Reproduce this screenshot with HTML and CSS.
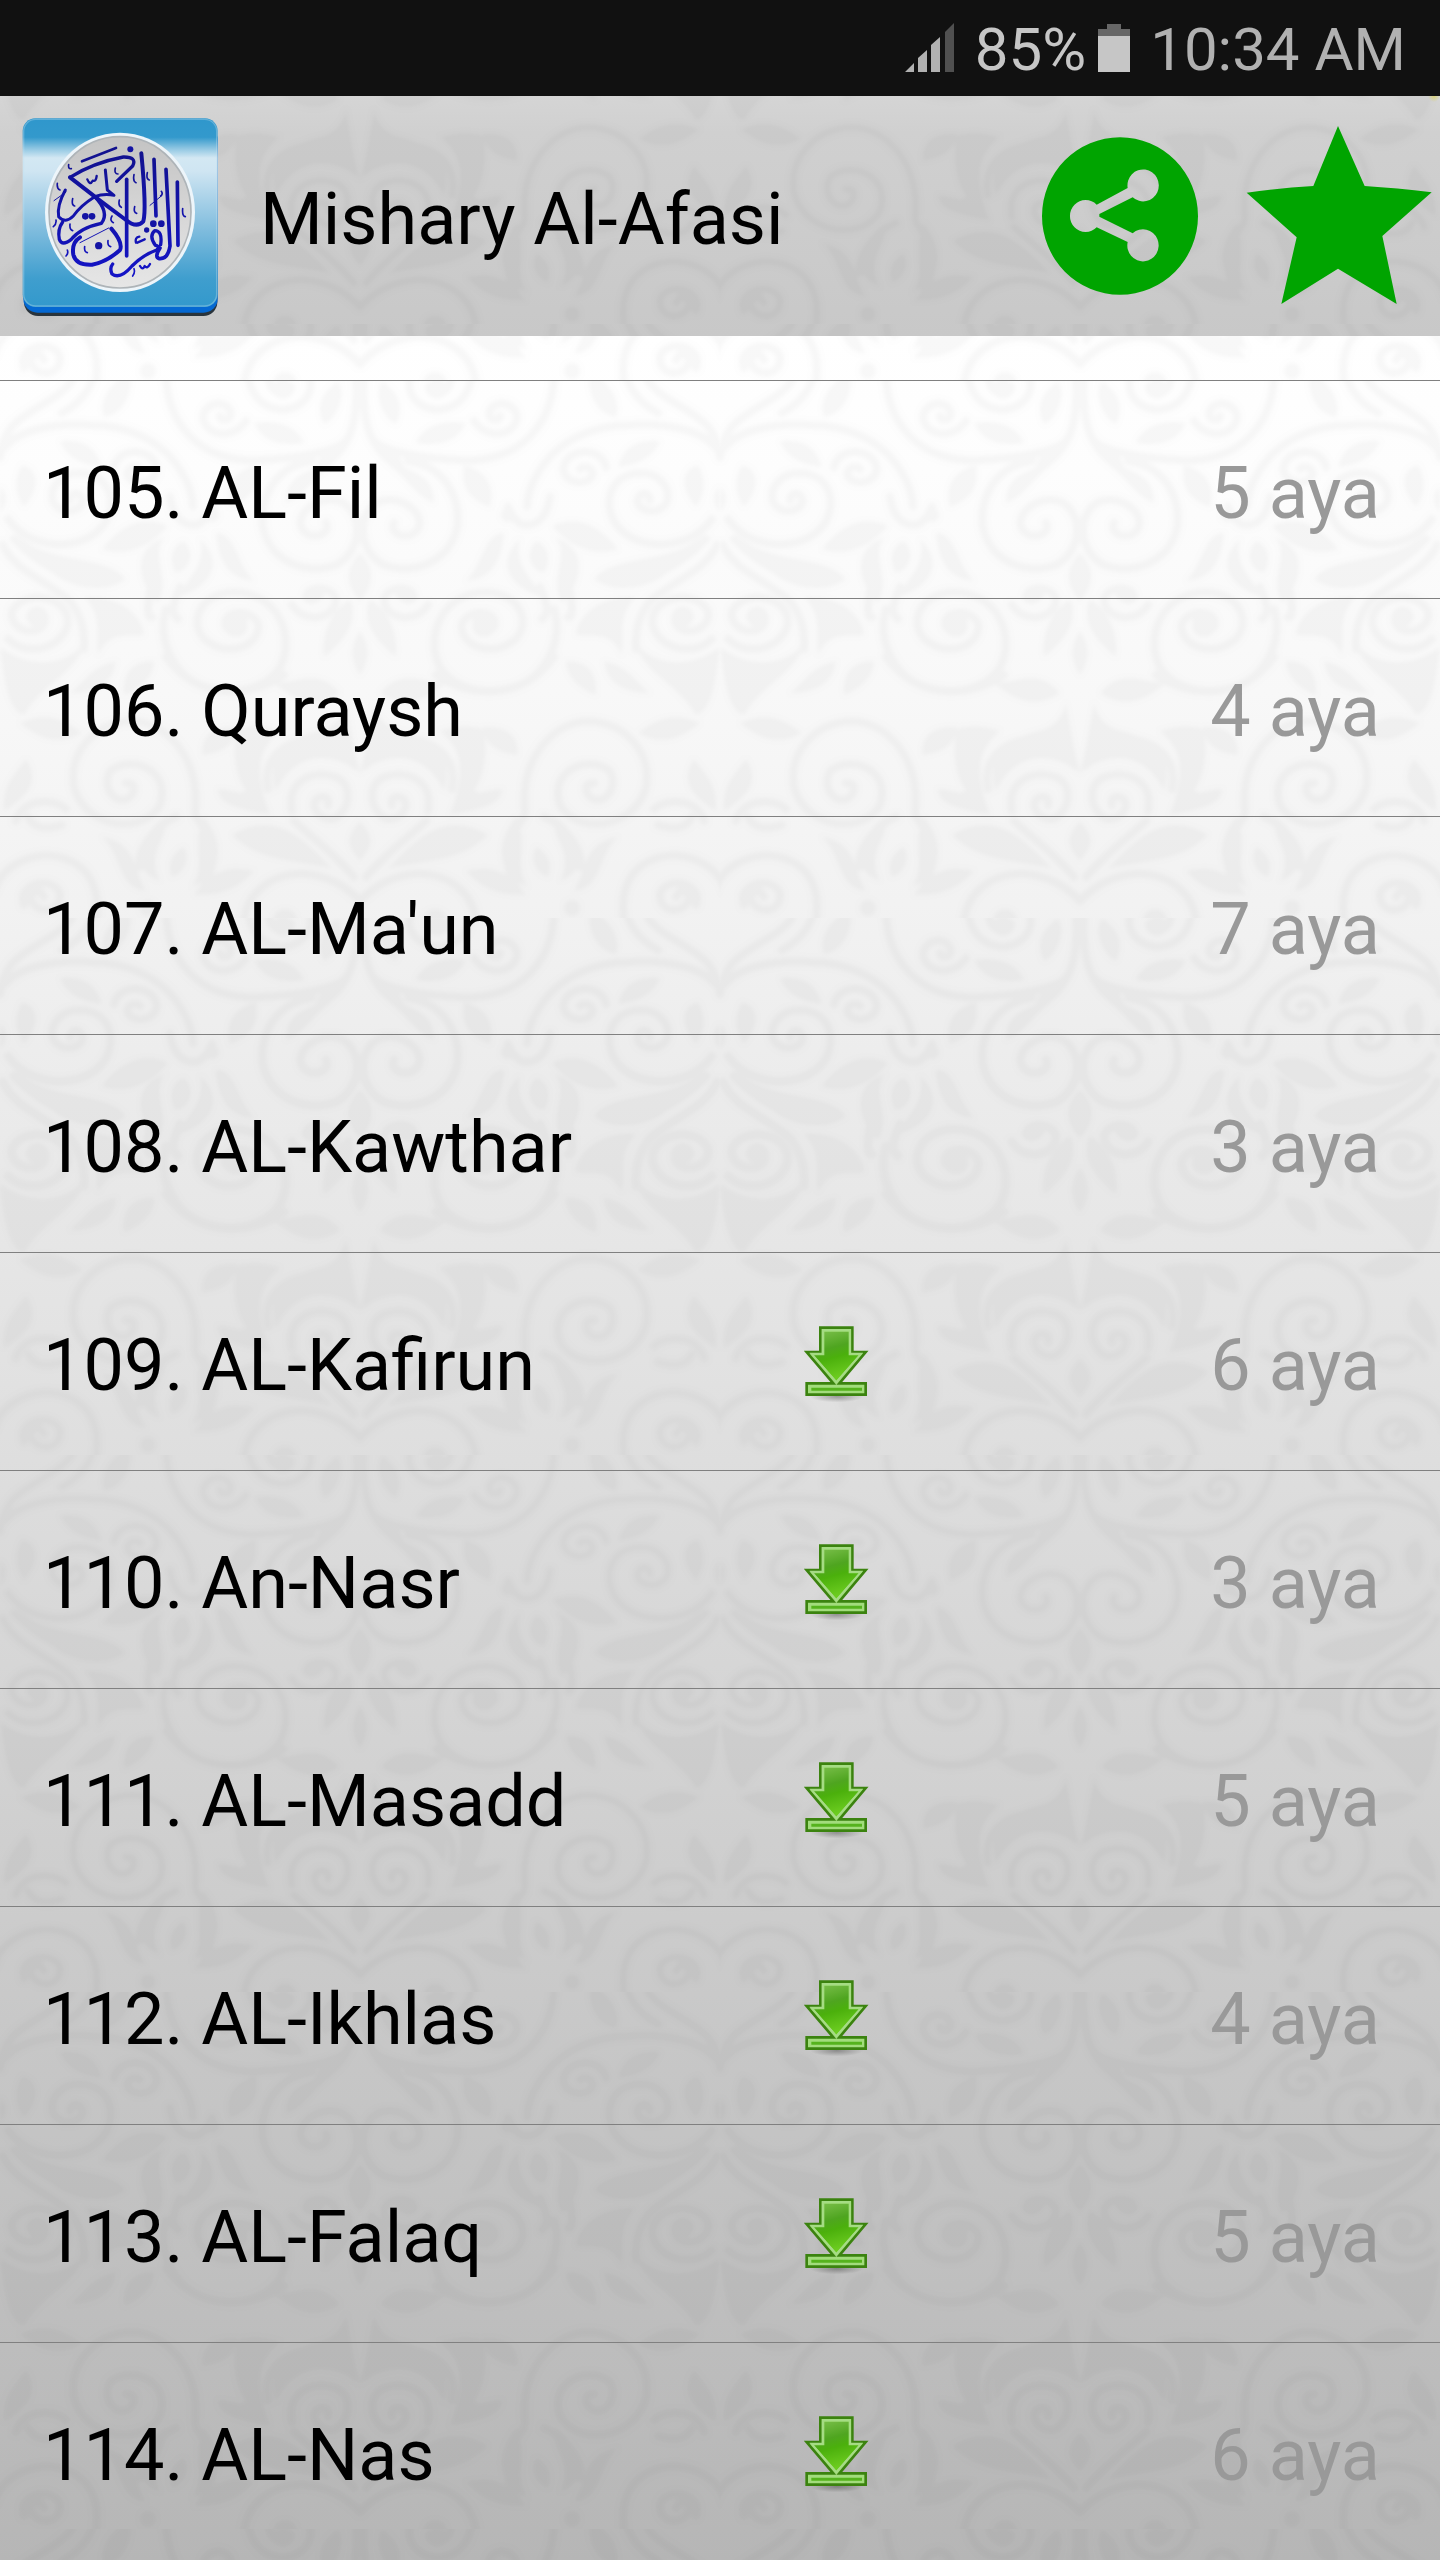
FILE: index.html
```html
<!DOCTYPE html>
<html lang="en">
<head>
<meta charset="utf-8">
<meta name="viewport" content="width=device-width, initial-scale=1">
<title>Mishary Al-Afasi</title>
<link rel="stylesheet" href="styles.css">
</head>
<body>
<svg class="defs" width="0" height="0" aria-hidden="true">
  <defs>
    <filter id="soften" x="-5%" y="-5%" width="110%" height="110%"><feGaussianBlur stdDeviation="2"/></filter>
    <!-- left half of the damask tile; the right half is its mirror image -->
    <g id="half" fill="none" stroke="#000" stroke-width="8" stroke-linecap="round" stroke-linejoin="round">
      <path d="M5 66C20 48 55 42 90 44C130 44 165 62 182 92Q192 108 193 125"/>
      <path d="M8 138C30 170 85 172 105 142C118 118 108 92 78 92C58 93 46 112 55 124C66 136 86 128 82 117C78 110 70 112 70 119"/>
      <path d="M114 86C118 66 150 66 156 84C160 98 142 106 130 98C122 90 134 82 140 88"/>
      <path d="M72 0C60 18 24 30 10 48Q2 60 0 76M92 0Q84 20 62 32"/>
      <path d="M246 40C234 58 208 56 203 38C202 22 226 16 231 32C230 42 220 40 220 35"/>
      <path d="M167 -20C160 40 200 84 262 79Q320 76 345 62Q358 44 356 0"/>
      <path d="M248 -12C248 40 308 38 311 4C312 -14 284 -28 270 -8C264 12 290 20 291 6"/>
      <path d="M312 80C282 84 264 106 262 136C262 176 302 196 336 184C362 170 364 134 342 121C320 112 294 132 302 148C312 162 332 152 326 142"/>
      <path d="M3 164C14 190 48 200 70 220Q86 240 84 268M14 158Q40 185 80 200"/>
      <path d="M8 258C28 278 66 266 68 240C66 214 24 208 12 230C8 250 40 258 45 240C46 228 32 226 30 236"/>
      <path d="M210 262C188 250 194 214 232 211C278 210 296 256 280 286C262 316 208 318 182 292C164 272 160 248 166 228M210 262C230 276 262 264 258 242C250 226 220 230 226 246Q234 254 242 244"/>
      <path d="M292 224C304 244 336 238 336 218C332 204 308 204 306 216Q312 222 320 214"/>
      <path d="M166 276C196 318 248 318 284 294"/>
      <path d="M195 430C200 380 170 342 132 340C92 342 68 374 74 406C84 446 142 456 160 424C172 390 132 372 110 390C100 410 120 428 132 414Q138 402 126 402"/>
      <path d="M268 408C262 376 286 358 318 358Q346 362 354 384M292 430C286 400 312 388 336 396C354 404 350 430 334 438C316 440 308 420 320 416Q330 414 328 424"/>
      <path d="M16 440C22 418 52 416 66 428M28 436Q36 452 62 444"/>
      <path d="M-6 510C4 474 62 460 88 494Q100 512 96 537M24 524C16 502 52 494 60 512C62 532 36 536 30 516Q38 504 44 516"/>
      <path d="M244 540C248 506 280 488 314 494Q342 500 360 520M294 440C316 460 336 474 354 496"/>
      <path d="M140 486C136 466 160 442 176 436M196 436Q224 470 204 506"/>
      <path d="M150 210Q145 238 152 236M180 206Q168 232 178 238M170 116Q174 142 192 144Q204 145 212 126"/>
      <g fill="#000" stroke="none">
        <path d="M60 60C84 58 96 66 102 86C82 84 66 76 60 60ZM22 84C42 90 38 110 24 126C14 112 14 98 22 84ZM130 -8C134 16 120 34 104 36C98 18 112 0 130 -8Z"/>
        <path d="M254 42C282 38 298 48 304 62C280 66 262 60 254 42ZM338 0C348 16 334 40 324 43C314 24 324 10 338 0ZM256 84C260 108 250 118 230 126C224 102 236 90 256 84Z"/>
        <path d="M356 42C352 76 326 84 310 104Q298 118 286 122C286 96 302 94 316 86C320 68 340 66 356 42Z"/>
        <path d="M168 145C150 166 126 176 102 168C118 148 140 132 168 145ZM166 156C148 172 172 196 158 222C136 200 132 166 166 156ZM184 160C198 176 186 190 176 192C168 178 172 164 184 160ZM200 158C222 178 216 204 178 216C190 194 206 184 200 158ZM216 152C236 152 236 182 254 200C226 198 218 176 216 152Z"/>
        <path d="M16 152C44 184 104 172 126 198C104 214 74 206 58 196Q32 176 16 152ZM84 216C116 214 142 232 144 254C122 256 110 250 98 274C96 250 102 234 84 216Z"/>
        <path d="M0 266C28 288 66 286 84 262C78 292 42 302 24 334C8 330 4 298 0 266ZM70 312C84 302 90 286 116 280C114 300 98 312 70 312ZM124 314C122 290 134 280 154 280C154 296 140 308 124 314Z"/>
        <path d="M274 302C298 302 318 286 340 312C322 324 302 326 274 302ZM20 342C46 330 64 338 82 352C60 364 42 360 20 342ZM202 374C202 352 214 346 236 346C236 364 222 372 202 374Z"/>
        <path d="M346 322C352 354 354 370 360 392C330 368 294 372 276 410C264 372 294 356 318 350Q340 346 346 322ZM236 348Q256 342 280 350C254 372 256 396 270 434C240 428 218 424 218 408C230 408 238 414 246 410C232 388 234 366 236 348Z"/>
        <path d="M4 430C2 404 14 394 26 378C38 396 34 412 4 430ZM0 106Q12 116 0 132ZM360 172C346 186 344 202 360 220ZM360 250C350 264 350 280 360 294Z"/>
        <path d="M350 218C360 240 344 260 324 276C322 254 328 234 350 218ZM164 436C172 458 144 468 160 500C130 490 138 456 164 436ZM204 436C228 466 220 494 192 506C208 482 190 466 204 436ZM184 466C192 482 180 494 172 496C166 482 174 470 184 466Z"/>
        <path d="M102 456C138 462 132 488 146 510C118 508 122 474 102 456ZM194 514C212 490 228 484 254 490C236 510 218 514 194 514ZM232 454C272 430 300 452 332 488C296 478 260 482 232 454ZM360 440C346 456 346 464 360 480Z"/>
        <circle cx="212" cy="134" r="7"/><circle cx="148" cy="527" r="8"/><circle cx="37" cy="236" r="10"/><circle cx="283" cy="8" r="10"/><circle cx="285" cy="540" r="12"/><circle cx="236" cy="244" r="12"/>
      </g>
    </g>
    <g id="tile" opacity=".027" filter="url(#soften)">
      <use href="#half"/><use href="#half" transform="matrix(-1 0 0 1 720 0)"/>
    </g>
    <pattern id="damask-list" width="720" height="537" y="45" patternUnits="userSpaceOnUse"><use href="#tile"/></pattern>
    <pattern id="damask-bar" width="720" height="537" y="228" patternUnits="userSpaceOnUse"><use href="#tile"/></pattern>

    <linearGradient id="tileBlue" x1="0" y1="0" x2="0" y2="1">
      <stop offset="0" stop-color="#2f97cc"/><stop offset=".1" stop-color="#3399cc"/><stop offset=".16" stop-color="#8fc6e2"/><stop offset=".21" stop-color="#d3e8f3"/><stop offset=".28" stop-color="#cfe5f2"/><stop offset=".6" stop-color="#7dbbdd"/><stop offset=".85" stop-color="#3f9ece"/><stop offset="1" stop-color="#3399cc"/>
    </linearGradient>
    <linearGradient id="disc" x1="0" y1="0" x2="0" y2="1">
      <stop offset="0" stop-color="#c3c3c3"/><stop offset=".5" stop-color="#d6d6d6"/><stop offset="1" stop-color="#e6e6e6"/>
    </linearGradient>
    <linearGradient id="ink" gradientUnits="userSpaceOnUse" x1="0" y1="150" x2="0" y2="550">
      <stop offset="0" stop-color="#12128c"/><stop offset="1" stop-color="#1414c8"/>
    </linearGradient>
    <linearGradient id="arrow" x1="0" y1="0" x2=".25" y2="1">
      <stop offset="0" stop-color="#7cc04c"/><stop offset=".4" stop-color="#4fa520"/><stop offset=".6" stop-color="#4bb00c"/><stop offset="1" stop-color="#6ccc20"/>
    </linearGradient>
    <radialGradient id="shade"><stop offset="0" stop-color="#000" stop-opacity=".3"/><stop offset="1" stop-color="#000" stop-opacity="0"/></radialGradient>
    <symbol id="download" viewBox="60 60 216 252">
      <ellipse cx="170" cy="290" rx="80" ry="17" fill="url(#shade)"/>
      <path d="M121 83H217V156H257L178 250H257V284H80V250H160L80 156H121Z" fill="#a2dc7c" stroke="#3b830f" stroke-width="8"/>
      <path d="M133 95H206V166H236L169 242L102 166H133Z" fill="url(#arrow)"/>
      <path d="M128 90H211V161H244L169 246L94 161H128Z" fill="none" stroke="#a6db86" stroke-width="5"/>
      <path d="M94 268H246" stroke="#55b31d" stroke-width="9"/>
    </symbol>
  </defs>
</svg>

<div class="status">
  <svg class="signal" viewBox="0 0 50 50" aria-label="Signal strength">
    <path fill="#b1b1b1" d="M0 49L9 40V49ZM13 49V35L22 27V49ZM26 49V22L35 14V49Z"/><path fill="#505050" d="M40 49V9L49 0V49Z"/>
  </svg>
  <span class="charge">85%</span>
  <svg class="battery" viewBox="0 0 32 48" aria-label="Battery">
    <path fill="#676767" d="M9 0H23V5H32V12H0V5H9Z"/><path fill="#c6c6c6" d="M0 12H32V48H0Z"/>
  </svg>
  <time class="clock">10:34 AM</time>
</div>

<header class="bar">
  <svg class="damask" aria-hidden="true"><rect width="100%" height="100%" fill="url(#damask-bar)"/></svg>
  <svg class="logo" viewBox="0 0 720 720" role="img" aria-label="Quran">
    <rect x="72" y="90" width="580" height="570" rx="42" fill="#2a343c"/>
    <rect x="70" y="90" width="583" height="560" rx="42" fill="#0568d2"/>
    <rect x="68" y="67" width="585" height="566" rx="38" fill="url(#tileBlue)"/>
    <rect x="71" y="70" width="579" height="560" rx="36" fill="none" stroke="#bfe0f0" stroke-opacity=".35" stroke-width="4"/>
    <ellipse cx="360" cy="349" rx="225" ry="239" fill="#edf5fa"/>
    <ellipse cx="360" cy="349" rx="213" ry="227" fill="url(#disc)" stroke="#aeb4b8" stroke-width="5"/>
    <g fill="none" stroke="url(#ink)" stroke-linecap="round" stroke-linejoin="round">
      <path d="M246 196L348 156" stroke-width="8"/>
      <path d="M350 256L398 210Q412 182 370 183Q280 200 210 244" stroke-width="10"/>
      <path d="M210 244L300 314L378 372Q410 398 430 376Q440 340 424 172" stroke-width="12"/>
      <path d="M316 222L322 282L342 298Q312 292 284 302Q240 330 220 360Q196 384 176 362Q170 330 196 282" stroke-width="9"/>
      <path d="M284 302Q330 350 304 382Q240 396 214 430Q186 452 178 430Q172 400 188 378" stroke-width="10"/>
      <path d="M380 250V480" stroke-width="11"/>
      <path d="M462 190L468 360M498 220L510 450Q504 490 478 488Q462 484 480 456M532 258L534 448" stroke-width="11"/>
      <path d="M482 446Q488 404 464 404Q446 420 466 448Q482 450 470 462Q430 476 396 510Q360 552 336 534Q328 516 338 504" stroke-width="10"/>
      <path d="M334 398Q370 440 360 462Q320 498 276 506Q228 508 220 476Q214 440 240 424" stroke-width="12"/>
      <path d="M408 440Q404 424 418 422M412 440L434 430M420 510Q428 524 434 510Q442 520 450 504M262 250Q270 270 278 254Q288 258 290 240" stroke-width="7"/>
      <path d="M206 206q-2 14 8 12M346 216q-4 18 8 18M402 236q-4 20 6 24M442 230q-4 20 6 22M172 262q-2 16 8 20M218 308q-4 20 6 22M358 312q-4 18 6 22M404 332q-4 18 6 20M210 384q-2 18 8 20M254 452q-2 16 8 18M324 434q-2 16 8 18M548 338q-2 22 8 24M336 360q-8 14 4 20M160 392q10-8 8-20M198 480q8-8 4-18M398 540q8-10 4-22M484 286q6 8-2 14" stroke-width="5"/>
      <path d="M162 314L198 288M240 440L326 396M450 328L484 300" stroke-width="3"/>
    </g>
    <g fill="#1414a4"><circle cx="391" cy="160" r="9"/><circle cx="256" cy="361" r="10"/><circle cx="276" cy="361" r="10"/><circle cx="460" cy="383" r="10"/><circle cx="484" cy="383" r="10"/><circle cx="296" cy="449" r="11"/><circle cx="440" cy="402" r="8"/></g>
  </svg>
  <h1 class="title">Mishary Al-Afasi</h1>
  <button class="action" type="button" aria-label="Share">
    <svg class="share" viewBox="60 0 480 720">
      <path fill="#00a400" fill-rule="evenodd" d="M300 124A234 236 0 1 1 300 596A234 236 0 1 1 300 124ZM323 276L230 326A47 48 0 1 0 230 394L323 438A47 48 0 1 0 338 412L238 362V354L338 304A47 48 0 1 0 323 276Z"/>
    </svg>
  </button>
  <button class="action" type="button" aria-label="Favourite">
    <svg class="star" viewBox="660 0 600 720">
      <path fill="#00a400" d="M954 90L1034 270Q1130 276 1235 289L1087 420L1130 624L954 518L784 624L830 424L680 290Q780 276 880 270Z"/>
    </svg>
  </button>
</header>

<main class="list">
  <svg class="damask" aria-hidden="true"><rect width="100%" height="100%" fill="url(#damask-list)"/></svg>
  <ul class="rows">
    <li class="row"><a class="name" href="#105">105. AL-Fil</a><span class="count">5 aya</span></li>
    <li class="row"><a class="name" href="#106">106. Quraysh</a><span class="count">4 aya</span></li>
    <li class="row"><a class="name" href="#107">107. AL-Ma'un</a><span class="count">7 aya</span></li>
    <li class="row"><a class="name" href="#108">108. AL-Kawthar</a><span class="count">3 aya</span></li>
    <li class="row"><a class="name" href="#109">109. AL-Kafirun</a><button class="get" type="button" aria-label="Download 109"><svg><use href="#download"/></svg></button><span class="count">6 aya</span></li>
    <li class="row"><a class="name" href="#110">110. An-Nasr</a><button class="get" type="button" aria-label="Download 110"><svg><use href="#download"/></svg></button><span class="count">3 aya</span></li>
    <li class="row"><a class="name" href="#111">111. AL-Masadd</a><button class="get" type="button" aria-label="Download 111"><svg><use href="#download"/></svg></button><span class="count">5 aya</span></li>
    <li class="row"><a class="name" href="#112">112. AL-Ikhlas</a><button class="get" type="button" aria-label="Download 112"><svg><use href="#download"/></svg></button><span class="count">4 aya</span></li>
    <li class="row"><a class="name" href="#113">113. AL-Falaq</a><button class="get" type="button" aria-label="Download 113"><svg><use href="#download"/></svg></button><span class="count">5 aya</span></li>
    <li class="row"><a class="name" href="#114">114. AL-Nas</a><button class="get" type="button" aria-label="Download 114"><svg><use href="#download"/></svg></button><span class="count">6 aya</span></li>
  </ul>
</main>
</body>
</html>
```
FILE: styles.css
```css
* {
  box-sizing: border-box;
}

body {
  margin: 0;
  min-height: 100vh;
  display: flex;
  flex-direction: column;
  font-family: Roboto, "Noto Sans", sans-serif;
  font-size: 72px;
  line-height: 84px;
  color: #000;
}

svg {
  display: block;
}

button {
  padding: 0;
  border: 0;
  background: none;
}

.defs {
  position: absolute;
}

.status {
  height: 96px;
  padding: 4px 34px 0 0;
  display: flex;
  align-items: center;
  justify-content: flex-end;
  background: #111;
  color: #b1b1b1;
  font-size: 60px;
  line-height: 72px;
}

.signal {
  width: 50px;
  height: 50px;
  margin: 0 20px 4px 0;
}

.charge {
  color: #c6c6c6;
}

.battery {
  width: 32px;
  height: 48px;
  margin: 0 20px 4px 12px;
}

.bar {
  position: relative;
  z-index: 0;
  height: 240px;
  display: flex;
  align-items: center;
  background:
    radial-gradient(circle at calc(100% - 6px) 0, rgba(222, 210, 60, 0.6), transparent 6px),
    linear-gradient(#d5d5d5, #d0d0d0 15%, #c8c8c8);
}

.damask {
  position: absolute;
  inset: 0;
  z-index: -1;
  width: 100%;
  height: 100%;
}

.logo {
  width: 240px;
  height: 240px;
}

.title {
  flex: 1;
  margin: 0;
  padding: 8px 0 0 20px;
  font-size: inherit;
  font-weight: 400;
}

.share {
  width: 160px;
  height: 240px;
}

.star {
  width: 200px;
  height: 240px;
  margin-left: 40px;
}

.list {
  position: relative;
  z-index: 0;
  flex: 1;
  padding-top: 44px;
  background: linear-gradient(#ffffff, #fdfdfd 6%, #f8f8f8 16%, #f1f1f1 27%, #e2e2e2 46%, #c6c6c6 78%, #b6b6b6);
}

.rows {
  margin: 0;
  padding: 0;
  list-style: none;
}

.row {
  min-height: 218px;
  padding: 0 60px 0 43px;
  display: grid;
  grid-template-columns: 757fr 72px 508fr;
  align-items: center;
  border-top: 1px solid #808080;
}

.name {
  padding-top: 8px;
  color: inherit;
  text-decoration: none;
}

.get svg {
  width: 72px;
  height: 84px;
}

.count {
  grid-column: 3;
  padding-top: 8px;
  text-align: right;
  color: #999;
}
```
